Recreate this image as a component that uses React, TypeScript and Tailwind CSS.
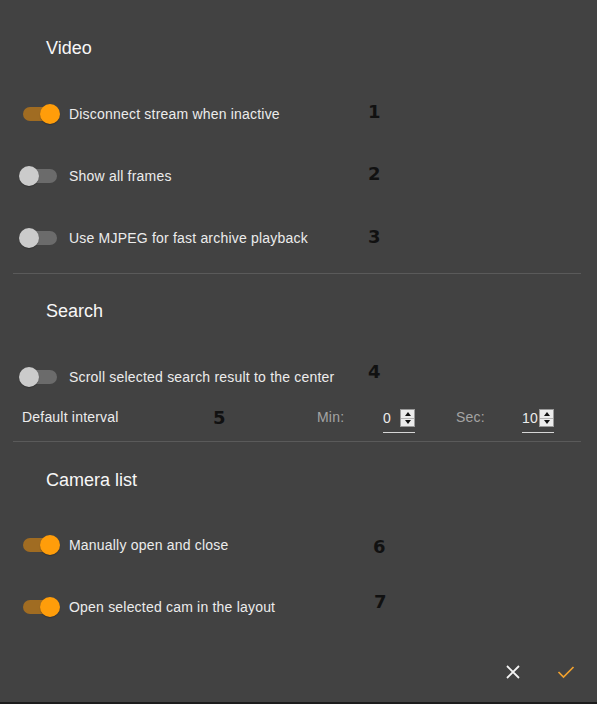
import React from "react";
import clsx from "clsx";

//TOGGLE
const Toggle = ({ on }: { on: boolean }) => (
  <span className="relative inline-flex h-[14px] w-[34px] shrink-0">
    <span
      className={clsx(
        "h-[14px] w-[34px] rounded-full",
        on ? "bg-[#a06c22]" : "bg-[#6b6b6b]"
      )}
    />
    <span
      className={clsx(
        "absolute top-[-3px] h-[20px] w-[20px] rounded-full shadow-[0_1px_1px_rgba(0,0,0,0.25)]",
        on ? "left-[17px] bg-[#ff9d0a]" : "left-[-4px] bg-[#cbcbcb]"
      )}
    />
  </span>
);

//ANNOTATION NUMBER
const Num = ({ n, className }: { n: string; className: string }) => (
  <span
    className={clsx(
      "absolute font-['DejaVu_Sans',sans-serif] text-[18px] font-bold leading-none text-[#111]",
      className
    )}
  >
    {n}
  </span>
);

const Row = ({
  on,
  label,
  children,
  height = "h-[62px]",
}: {
  on: boolean;
  label: string;
  children?: React.ReactNode;
  height?: string;
}) => (
  <div className={clsx("relative flex items-center pl-[23px]", height)}>
    <Toggle on={on} />
    <span className="ml-[12px] text-[14px] tracking-[0.2px] text-[#ececec]">
      {label}
    </span>
    {children}
  </div>
);

const Heading = ({ children }: { children: React.ReactNode }) => (
  <h2 className="pl-[46px] text-[18px] leading-[22px] text-[#f7f7f7]">
    {children}
  </h2>
);

const Divider = () => <div className="ml-[13px] mr-[16px] h-px bg-[#5a5a5a]" />;

//SPINNER
const Spinner = () => (
  <span className="flex h-[18px] w-[15px] flex-col border border-[#9a9a9a] bg-[#ececec]">
    <span className="flex flex-1 items-center justify-center border-b border-[#b4b4b4]">
      <span className="h-0 w-0 border-x-[3px] border-b-[4px] border-x-transparent border-b-[#111]" />
    </span>
    <span className="flex flex-1 items-center justify-center">
      <span className="h-0 w-0 border-x-[3px] border-t-[4px] border-x-transparent border-t-[#111]" />
    </span>
  </span>
);

const NumberInput = ({ value }: { value: string }) => (
  <div className="mt-[10px] flex w-[32px] flex-col self-start">
    <div className="flex h-[18px] items-center justify-between">
      <span className="text-[14px] text-[#ececec]">{value}</span>
      <Spinner />
    </div>
    <div className="mt-[5px] h-px bg-[#d6d6d6]" />
  </div>
);

export default function App() {
  return (
    <div className="flex h-[704px] w-[597px] flex-col border-b-2 border-[#1c1c1c] bg-[#424242] font-['Liberation_Sans',Arial,sans-serif]">
      {/* VIDEO */}
      <div className="pt-[37px]">
        <Heading>Video</Heading>
      </div>
      <div className="mt-[24px]">
        <Row on={true} label="Disconnect stream when inactive">
          <Num n="1" className="left-[368px] top-[20px]" />
        </Row>
        <Row on={false} label="Show all frames">
          <Num n="2" className="left-[368px] top-[20px]" />
        </Row>
        <Row on={false} label="Use MJPEG for fast archive playback">
          <Num n="3" className="left-[368px] top-[21px]" />
        </Row>
      </div>
      <div className="mt-[4px]">
        <Divider />
      </div>

      {/* SEARCH */}
      <div className="pt-[26px]">
        <Heading>Search</Heading>
      </div>
      <div className="mt-[35px]">
        <Row on={false} label="Scroll selected search result to the center" height="h-[40px]">
          <Num n="4" className="left-[368px] top-[6px]" />
        </Row>
        <div className="relative mt-[2px] flex h-[36px] items-center pl-[22px] text-[14px] tracking-[0.2px]">
          <span className="w-[295px] text-[#ececec]">Default interval</span>
          <Num n="5" className="left-[213px] top-[10px]" />
          <span className="w-[66px] text-[#a4a4a4]">Min:</span>
          <NumberInput value="0" />
          <span className="ml-[41px] w-[66px] text-[#a4a4a4]">Sec:</span>
          <NumberInput value="10" />
        </div>
      </div>
      <div className="mt-[6px]">
        <Divider />
      </div>

      {/* CAMERA LIST */}
      <div className="pt-[27px]">
        <Heading>Camera list</Heading>
      </div>
      <div className="mt-[23px]">
        <Row on={true} label="Manually open and close">
          <Num n="6" className="left-[373px] top-[24px]" />
        </Row>
        <Row on={true} label="Open selected cam in the layout">
          <Num n="7" className="left-[374px] top-[17px]" />
        </Row>
      </div>

      {/* FOOTER */}
      <div className="flex flex-1 items-center justify-end pr-[22px] pt-[4px]">
        <button className="flex h-[16px] w-[16px] items-center justify-center">
          <svg width="16" height="16" viewBox="0 0 16 16">
            <path d="M2 2 L14 14 M14 2 L2 14" stroke="#f4f4f4" strokeWidth="1.8" />
          </svg>
        </button>
        <button className="ml-[36px] flex h-[14px] w-[18px] items-center justify-center">
          <svg width="18" height="14" viewBox="0 0 18 14">
            <path d="M1.5 7 L6.5 12 L16.5 2" fill="none" stroke="#f0a12e" strokeWidth="1.7" />
          </svg>
        </button>
      </div>
    </div>
  );
}
